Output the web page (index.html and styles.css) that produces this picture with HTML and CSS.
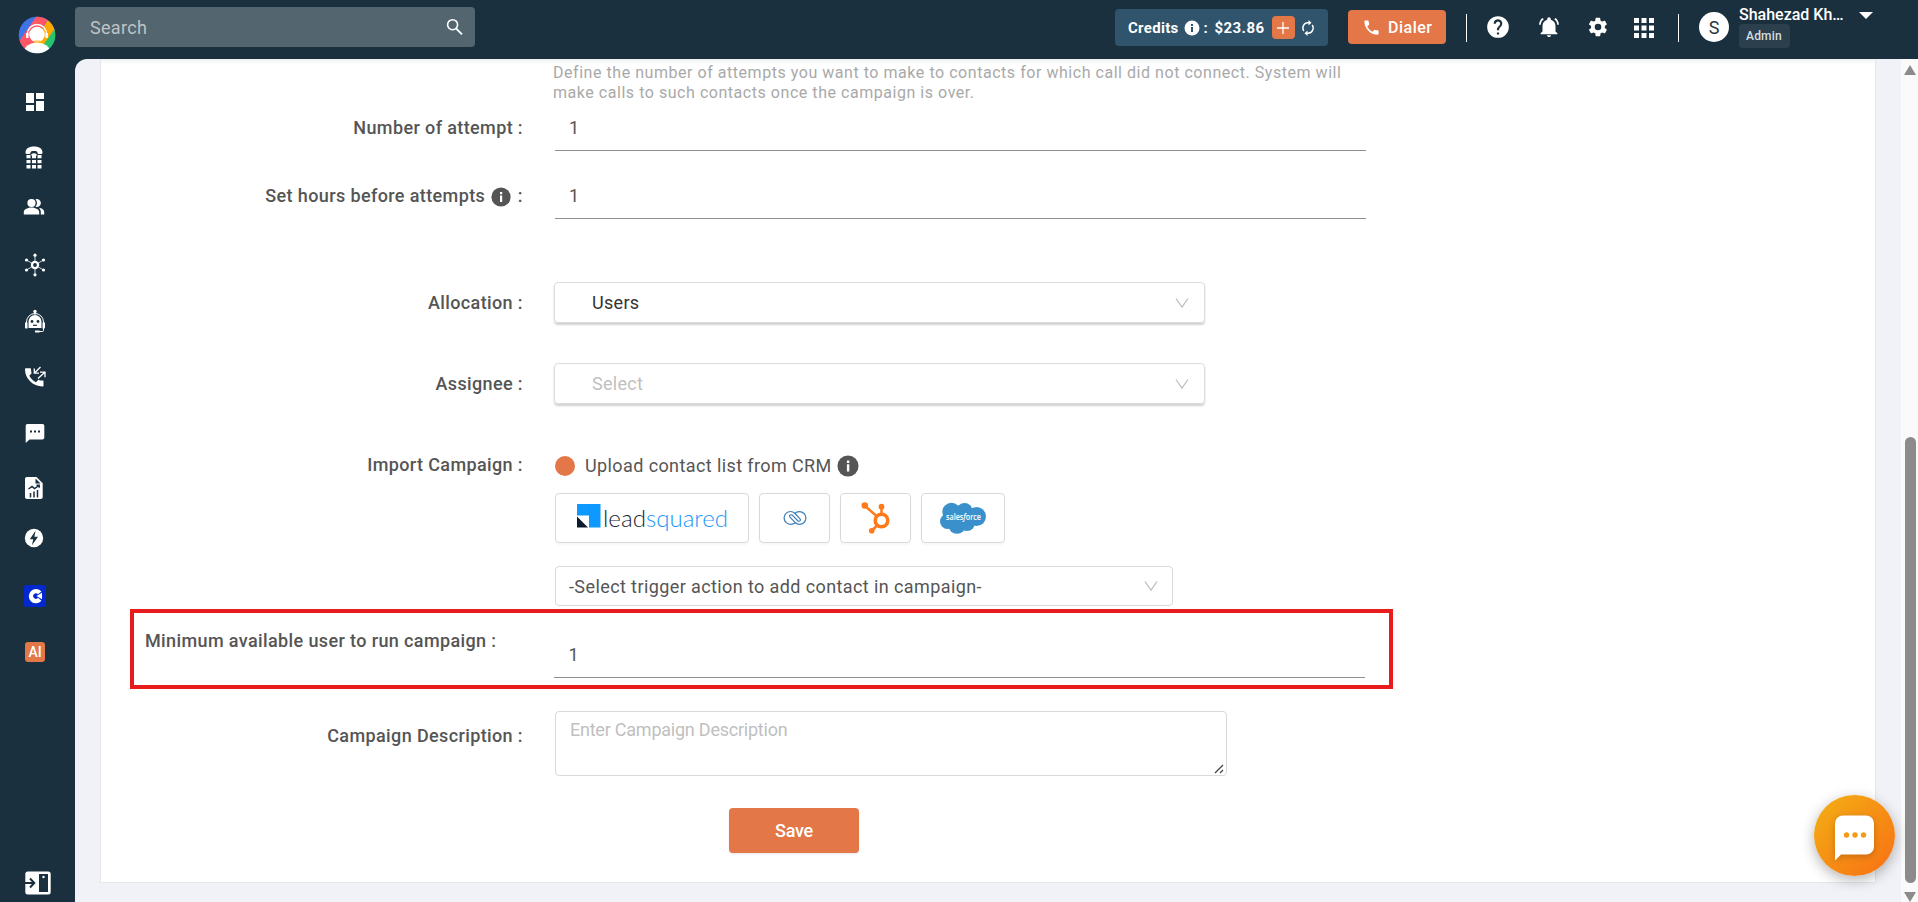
FILE: index.html
```html
<!DOCTYPE html>
<html lang="en">
<head>
    <meta charset="UTF-8">
    <meta name="viewport" content="width=device-width, initial-scale=1.0">
    <title>Campaign</title>
    <link rel="stylesheet" href="styles.css">
</head>
<body>

<!-- Left navigation -->
<aside class="sidebar">
    <a class="logo">
        <svg width="38" height="38" viewBox="0 0 38 38">
            <defs><clipPath id="logoClip"><circle cx="19" cy="19" r="18.3"/></clipPath></defs>
            <g clip-path="url(#logoClip)">
                <rect width="38" height="38" fill="#3f74e8"/>
                <path d="M20 -2L30 3L10 38H-2V30Z" fill="#ff5565"/>
                <path d="M31 2L40 12L24 34L14 30Z" fill="#ffa800"/>
                <path d="M38 11V38H20L26 28Z" fill="#26c46c"/>
                <ellipse cx="19" cy="36" rx="13" ry="9.5" fill="#fff"/>
            </g>
            <circle cx="19" cy="18.5" r="7.8" fill="#fff"/>
            <path d="M9.5 20v-2a9.5 9.5 0 0 1 19 0v2" fill="none" stroke="#fff" stroke-width="1.4"/>
            <path d="M9.3 17v5M28.700 17v5" stroke="#fff" stroke-width="2.400"/>
            <path d="M16 25.200h6.500" stroke="#ffb52e" stroke-width="1.200"/>
        </svg>
    </a>
    <nav>
        <a><svg width="24" height="24" viewBox="0 0 24 24"><path d="M3 13h8V3H3v10zm0 8h8v-6H3v6zm10 0h8V11h-8v10zm0-18v6h8V3h-8z"/></svg></a>
        <a class="shift"><svg width="18" height="24" viewBox="0 0 18 24"><path d="M.5 6.500C.5 2 5 .5 9 .5s8.500 1.500 8.500 6c0 1.100-.7 1.500-1.500 1.500h-2.500c-.7 0-1-.5-1-1.200 0-1.400-1.500-1.800-3.500-1.800s-3.500.4-3.500 1.800c0 .7-.3 1.200-1 1.200H2C1.200 8 .5 7.600.5 6.500z"/><path d="M1.500 9h4v3.300h-4zM7 9h4v3.300H7zM12.500 9h4v3.300h-4zM1.500 14h4v3.300h-4zM7 14h4v3.300H7zM12.500 14h4v3.300h-4zM1.500 19h4v3.500h-4zM7 19h4v3.500H7zM12.500 19h4v3.500h-4z"/><path d="M6 9.500c0-3 6-3 6 0z"/></svg></a>
        <a class="short shift"><svg width="22" height="18" viewBox="0 0 22 18"><circle cx="8.500" cy="5" r="4.100"/><path d="M.8 16.500V14c0-3 4.500-4.500 7.700-4.500s7.700 1.500 7.700 4.500v2.500zM12.500 1.300a4 4 0 1 1 0 7.500 5.500 5.500 0 0 0 0-7.500zM15.700 9.700c2.800.4 5.500 1.700 5.500 4.300v2.500h-3.400V14c0-1.900-.8-3.200-2.100-4.300z"/></svg></a>
        <a><svg width="22" height="24" viewBox="0 0 22 24"><path d="M11 2v20M2.500 7l17 10M19.500 7l-17 10" stroke="#fff" stroke-width=".8"/><circle cx="11" cy="12" r="4.200"/><circle cx="11" cy="12" r="1.900" fill="#1a303e"/><circle cx="11" cy="2.200" r="1.600"/><circle cx="11" cy="21.800" r="1.600"/><circle cx="2.500" cy="7" r="1.600"/><circle cx="19.500" cy="7" r="1.600"/><circle cx="2.500" cy="17" r="1.600"/><circle cx="19.500" cy="17" r="1.600"/></svg></a>
        <a><svg width="22" height="24" viewBox="0 0 22 24"><circle cx="11" cy="2.500" r="1.700"/><path d="M11 3v3M2.500 14v-1a8.500 8.500 0 0 1 17 0v1" fill="none" stroke="#fff" stroke-width="1"/><path d="M4.500 19v-6.500a6.500 6.500 0 0 1 13 0V19zM1 13.500h2.500v6H2.200C1.500 19.500 1 19 1 18.400zM21 13.500h-2.500v6h1.300c.7 0 1.200-.5 1.200-1.100z"/><circle cx="8" cy="12.500" r="1.400" fill="#1a303e"/><circle cx="14" cy="12.500" r="1.400" fill="#1a303e"/><path d="M9 16.300h4" stroke="#1a303e" stroke-width="1.200"/><path d="M19.500 19v2.500q0 1-1 1h-4" fill="none" stroke="#fff"/><path d="M11 21.500h4.500v2H11z"/></svg></a>
        <a><svg width="22" height="22" viewBox="0 0 22 22"><path d="M1 3.200c0-.6.400-1 1-1h4c.6 0 1 .4 1 1 0 1.300.1 2.400.5 3.500.1.400 0 .8-.3 1.100L5.300 9.700c1.500 2.900 3.700 5 6.600 6.500l2-2c.3-.3.700-.4 1.100-.3 1.100.4 2.300.5 3.500.5.600 0 1 .4 1 1v4c0 .6-.4 1-1 1C8.800 20.400 1 12.600 1 3.200z"/><path d="M16.500 1L10.500 7M10.300 2.500v4.700H15M14 12.500l6.500-6M16 6.200h5v5" fill="none" stroke="#fff" stroke-width="1.300"/></svg></a>
        <a><svg width="24" height="24" viewBox="0 0 24 24"><path d="M19.500 3h-15C3.500 3 2.700 3.800 2.700 4.800V22l3.800-3.600h13c1 0 1.800-.8 1.800-1.800V4.800c0-1-.8-1.800-1.800-1.800zM9 11.500H7v-2h2zm4 0h-2v-2h2zm4 0h-2v-2h2z"/></svg></a>
        <a class="shift raised"><svg width="18" height="24" viewBox="0 0 18 24"><path d="M2 1h9.500L17.700 7.200V21c0 1.200-.8 2-2 2H2C.8 23 0 22.200 0 21V3c0-1.200.8-2 2-2z"/><path d="M10.500 2.500v5H15.500z" fill="#1a303e"/><path d="M3.500 13l3.500-2.500 2.500 2L14 9.500M11.500 9.200h2.700v2.500M5.500 21.500v-4.500M9 21.500v-6M12.500 21.500v-7.500" fill="none" stroke="#1a303e" stroke-width="1.500"/></svg></a>
        <a class="short shift"><svg width="20" height="20" viewBox="0 0 20 20"><circle cx="10" cy="10" r="9.200"/><path d="M11.500 2.800L5.800 11.200h3.400L8 17.200l6-8.400h-3.600z" fill="#1a303e"/></svg></a>
        <a><svg width="22" height="22" viewBox="0 0 22 22"><rect width="22" height="22" rx="2.500" fill="#0328cf"/><path d="M17.500 6.500A7.200 7.200 0 1 0 17.500 15.800L14 12.800a2.700 2.700 0 1 1 0-3.500z"/><path d="M12.500 11l5.500-3.200v6.500z"/></svg></a>
        <a><span class="ai">AI</span></a>
    </nav>
    <a class="expand">
        <svg width="26" height="24" viewBox="0 0 26 24"><rect x=".3" y=".5" width="25.400" height="23" rx="2.500"/><path d="M0 12h8.500M5 7.500L9.300 12L5 16.500" fill="none" stroke="#1a303e" stroke-width="2"/><rect x="14" y="3" width="9" height="18" fill="#1a303e"/><circle cx="18.500" cy="6" r="1.200"/></svg>
    </a>
</aside>

<div class="page">
    <!-- Top bar -->
    <header class="topbar">
        <div class="search">
            <span>Search</span>
            <svg width="20" height="20" viewBox="0 0 20 20"><circle cx="7.600" cy="7.700" r="5" fill="none" stroke="#fff" stroke-width="1.600"/><path d="M11 11.400l6 6" stroke="#fff" stroke-width="1.900"/></svg>
        </div>
        <div class="credits">
            <span>Credits</span>
            <svg class="credits-info" width="16" height="16" viewBox="0 0 16 16"><circle cx="8" cy="8" r="7.500" fill="#fff"/><path d="M7 7h2v5H7zM7 4h2v2H7z" fill="#2f546b"/></svg>
            <span class="amount">: $23.86</span>
            <span class="plus"><svg width="12" height="12" viewBox="0 0 12 12"><path d="M6 0v12M0 6h12" stroke="#fff" stroke-width="1.300"/></svg></span>
            <svg width="14" height="16" viewBox="0 0 14 16"><path d="M8.200 2.800H7A5.200 5.200 0 0 0 2.800 11M5.800 13.200H7A5.200 5.200 0 0 0 11.200 5" fill="none" stroke="#fff" stroke-width="1.400"/><path d="M7.500 0l3 2.800-3 2.800zM6.500 10.400v5.600l-3-2.800z" fill="#fff"/></svg>
        </div>
        <button class="dialer">
            <svg width="20" height="20" viewBox="0 0 24 24"><path d="M6.600 10.800c1.400 2.800 3.800 5.100 6.600 6.600l2.200-2.200c.3-.3.700-.4 1-.2 1.100.4 2.300.6 3.600.6.600 0 1 .4 1 1V20c0 .6-.4 1-1 1C10.600 21 3 13.400 3 4c0-.6.4-1 1-1h3.500c.6 0 1 .4 1 1 0 1.300.2 2.500.6 3.600.1.300 0 .7-.2 1z" fill="#fff"/></svg>
            Dialer
        </button>
        <i class="divider"></i>
        <div class="tools">
            <svg width="26" height="26" viewBox="0 0 24 24"><path d="M12 2a10 10 0 1 0 0 20 10 10 0 0 0 0-20zm1 17h-2v-2h2zm2.100-7.700l-.9.900C13.400 12.900 13 13.500 13 15h-2v-.5c0-1.100.4-2.100 1.200-2.800l1.200-1.300A2 2 0 1 0 10 9H8a4 4 0 1 1 7.100 2.300z"/></svg>
            <svg width="24" height="24" viewBox="0 0 24 24"><path d="M12 22c1.100 0 2-.8 2-1.800h-4c0 1 .9 1.800 2 1.800zM18.500 16.500V11c0-3-1.800-5.500-4.700-6.300V4a1.800 1.800 0 0 0-3.600 0v.7C7.300 5.500 5.500 8 5.500 11v5.500l-1.900 1.800v1h16.800v-1zM6.800 4.300L5.500 3C3.300 4.600 2.200 7 2.100 9.800h1.700c.1-2.300 1.200-4.300 3-5.500zM20.200 9.800h1.700c-.1-2.800-1.200-5.200-3.400-6.800l-1.300 1.300c1.800 1.200 2.900 3.200 3 5.500z"/></svg>
            <svg width="22" height="22" viewBox="0 0 24 24"><path d="M19.400 13c0-.3.100-.6.100-1s0-.6-.1-1l2.100-1.600c.2-.2.300-.4.100-.7l-2-3.400c-.1-.2-.4-.3-.6-.2l-2.500 1c-.5-.4-1.100-.7-1.700-1l-.4-2.600c0-.3-.2-.5-.5-.5h-4c-.2 0-.4.200-.5.500L9 5.100c-.6.300-1.200.6-1.700 1l-2.500-1c-.2-.1-.5 0-.6.200l-2 3.400c-.1.300-.1.500.1.700L4.500 11c0 .4-.1.700-.1 1s0 .7.100 1l-2.200 1.600c-.2.200-.2.400-.1.700l2 3.400c.1.200.4.300.6.200l2.500-1c.5.400 1.100.7 1.700 1l.4 2.600c.1.300.3.500.5.500h4c.3 0 .5-.2.500-.5l.4-2.600c.6-.3 1.200-.6 1.700-1l2.500 1c.2.100.5 0 .6-.2l2-3.400c.2-.3.100-.5-.1-.7zM12 15.600a3.600 3.600 0 1 1 0-7.200 3.600 3.600 0 0 1 0 7.200z"/></svg>
            <svg class="apps" width="20" height="20" viewBox="0 0 20 20"><path d="M0 0h5v5H0zM7.500 0h5v5h-5zM15 0h5v5h-5zM0 7.500h5v5H0zM7.500 7.500h5v5h-5zM15 7.500h5v5h-5zM0 15h5v5H0zM7.500 15h5v5h-5zM15 15h5v5h-5z"/></svg>
        </div>
        <i class="divider"></i>
        <div class="avatar">S</div>
        <div class="account">
            <span class="name">Shahezad Kh…</span>
            <span class="role">Admin</span>
        </div>
        <i class="caret"></i>
    </header>

    <div class="viewport">
        <main class="content">
            <!-- Campaign form -->
            <form class="card">
                <p class="hint">Define the number of attempts you want to make to contacts for which call did not connect. System will make calls to such contacts once the campaign is over.</p>

                <div class="row row-attempt">
                    <label>Number of attempt :</label>
                    <div class="line-input">1</div>
                </div>
                <div class="row row-hours">
                    <label>Set hours before attempts <svg class="info" width="20" height="20" viewBox="0 0 20 20"><circle cx="10" cy="10" r="9.600" fill="#555"/><path d="M9 8.500h2.200V15H9zM9 5h2.200v2.200H9z" fill="#fff"/></svg> :</label>
                    <div class="line-input">1</div>
                </div>
                <div class="row row-allocation">
                    <label>Allocation :</label>
                    <div class="select">
                        <span>Users</span>
                        <svg width="14" height="12" viewBox="0 0 14 12"><path d="M1 1.500l6 8.500 6-8.500" fill="none" stroke="#bfbfbf" stroke-width="1.300"/></svg>
                    </div>
                </div>
                <div class="row row-assignee">
                    <label>Assignee :</label>
                    <div class="select empty">
                        <span>Select</span>
                        <svg width="14" height="12" viewBox="0 0 14 12"><path d="M1 1.500l6 8.500 6-8.500" fill="none" stroke="#bfbfbf" stroke-width="1.300"/></svg>
                    </div>
                </div>
                <div class="row row-import">
                    <label>Import Campaign :</label>
                    <div class="import">
                        <div class="radio"><i></i><span>Upload contact list from CRM</span><svg width="22" height="22" viewBox="0 0 20 20"><circle cx="10" cy="10" r="9.600" fill="#555"/><path d="M9 8.500h2.200V15H9zM9 5h2.200v2.200H9z" fill="#fff"/></svg></div>
                        <div class="crms">
                            <div class="crm leadsquared">
                                <svg width="154" height="42" viewBox="0 -5 154 42">
                                    <path d="M0 0h23.500v23.500H12V11.500H0z" fill="#0d99ff"/>
                                    <path d="M0 12.500l11 11H0z" fill="#0b1b2e"/>
                                    <text x="26" y="23" textLength="43" lengthAdjust="spacingAndGlyphs" fill="#1b2436">lead</text>
                                    <text x="69" y="23" textLength="82" lengthAdjust="spacingAndGlyphs" fill="#1c96fa">squared</text>
                                </svg>
                            </div>
                            <div class="crm">
                                <svg width="24" height="16" viewBox="0 0 24 16"><path d="M12.800 12.200Q10.500 14.300 7.500 14.300A6.300 6.300 0 0 1 7.500 1.500Q10 1.500 12 3.500L17 8.800Q18 10.200 16.800 11Q15.600 11.700 14.500 10.500L9.300 5.200M11.200 3.800Q13.500 1.600 16.500 1.600A6.300 6.300 0 0 1 16.500 14.400Q14 14.400 12 12.400L7 7.100Q6 5.800 7.200 5Q8.400 4.300 9.500 5.500" fill="none" stroke="#3f80b8" stroke-width="1.200"/></svg>
                            </div>
                            <div class="crm">
                                <svg width="30" height="32" viewBox="0 0 30 32"><g fill="none" stroke="#ff7a1a"><circle cx="20.500" cy="18.500" r="6.300" stroke-width="3.500"/><path d="M20.500 12V5M15.500 14L4 4M16 23.500l-5 5" stroke-width="2.500"/></g><g fill="#ff7a1a"><circle cx="3.800" cy="3.500" r="3.300"/><circle cx="20.500" cy="4.700" r="2.900"/><circle cx="10.700" cy="28.800" r="2.800"/></g></svg>
                            </div>
                            <div class="crm salesforce">
                                <svg width="46" height="32" viewBox="0 0 46 32"><g fill="#3990cb"><circle cx="11.500" cy="10" r="9.200"/><circle cx="24.500" cy="9" r="8"/><circle cx="36.500" cy="14.500" r="9.500"/><circle cx="7.500" cy="19.500" r="7.500"/><circle cx="17" cy="23" r="8.800"/><circle cx="27" cy="21" r="8"/></g><text x="6" y="17.500" textLength="35" lengthAdjust="spacingAndGlyphs" fill="#fff">sales<tspan font-style="italic">f</tspan>orce</text></svg>
                            </div>
                        </div>
                        <div class="trigger">
                            <span>-Select trigger action to add contact in campaign-</span>
                            <svg width="14" height="12" viewBox="0 0 14 12"><path d="M1 1.500l6 8.500 6-8.500" fill="none" stroke="#bfbfbf" stroke-width="1.300"/></svg>
                        </div>
                    </div>
                </div>
                <!-- Highlighted setting -->
                <div class="highlight">
                    <label>Minimum available user to run campaign :</label>
                    <div class="line-input">1</div>
                </div>
                <div class="row row-description">
                    <label>Campaign Description :</label>
                    <div class="textarea">Enter Campaign Description
                        <svg class="grip" width="10" height="10" viewBox="0 0 10 10"><path d="M1 9L9 1M6 9l3-3" stroke="#444" stroke-width="1.300"/></svg>
                    </div>
                </div>
                <button type="button" class="save">Save</button>
            </form>
        </main>
        <!-- Scrollbar -->
        <div class="scrollbar">
            <i class="up"></i>
            <i class="thumb"></i>
            <i class="down"></i>
        </div>
    </div>
</div>

<!-- Chat launcher -->
<div class="chat">
    <svg width="42" height="48" viewBox="0 0 42 48"><path d="M9 1.500h23a8 8 0 0 1 8 8v23a8 8 0 0 1-8 8H7l-6 6v-37a8 8 0 0 1 8-8z" fill="#fff"/><circle cx="12.500" cy="21" r="2.700" fill="#f59a15"/><circle cx="21" cy="21" r="2.700" fill="#f59a15"/><circle cx="29.500" cy="21" r="2.700" fill="#f59a15"/></svg>
</div>

</body>
</html>
```

FILE: styles.css
```css
* {
    box-sizing: border-box;
}

body {
    margin: 0;
    height: 100vh;
    display: flex;
    overflow: hidden;
    font-family: Roboto, sans-serif;
    font-size: 18px;
    color: #555;
    background-color: #1a303e;
}

svg {
    display: block;
    flex: none;
}

/* Sidebar */
.sidebar {
    width: 75px;
    flex: none;
    display: flex;
    flex-direction: column;
}

.logo {
    height: 74px;
    padding: 16px 0 0 18px;
}

.sidebar nav a {
    height: 56px;
    width: 70px;
    display: flex;
    align-items: center;
    justify-content: center;
    fill: #fff;
}

.sidebar nav a.short {
    height: 44px;
    margin-bottom: 7px;
    padding-bottom: 2px;
}

.sidebar nav a.shift {
    width: 68px;
}

.sidebar nav a.raised {
    padding-bottom: 2px;
}

.ai {
    width: 20px;
    height: 20px;
    border-radius: 3px;
    background-color: #e37747;
    color: #fff;
    font-size: 14px;
    font-weight: 500;
    line-height: 20px;
    text-align: center;
}

.expand {
    margin-top: auto;
    padding: 0 0 7px 25px;
    fill: #fff;
}

/* Top bar */
.page {
    flex: 1;
    display: flex;
    flex-direction: column;
    min-width: 0;
}

.topbar {
    height: 59px;
    flex: none;
    display: flex;
    align-items: flex-start;
    color: #fff;
}

.search {
    width: 400px;
    height: 40px;
    margin-top: 7px;
    padding: 0 10px 0 15px;
    border-radius: 4px;
    background-color: #53666f;
    color: #bfc3c5;
    display: flex;
    align-items: center;
    justify-content: space-between;
    letter-spacing: 0.3px;
}

.credits {
    width: 213px;
    height: 37px;
    margin: 9px 0 0 640px;
    padding-left: 13px;
    border-radius: 4px;
    background-color: #2f546b;
    font-size: 15px;
    font-weight: 700;
    letter-spacing: 0.3px;
    display: flex;
    align-items: center;
}

.credits-info {
    margin: 1px 4px 0 5px;
}

.amount {
    width: 68px;
    letter-spacing: 0.45px;
    word-spacing: 2px;
    white-space: nowrap;
}

.plus {
    width: 23px;
    height: 23px;
    margin-right: 6px;
    border-radius: 4px;
    background-color: #e37747;
    display: flex;
    align-items: center;
    justify-content: center;
}

.dialer {
    width: 98px;
    height: 34px;
    margin: 10px 20px 0 20px;
    padding: 0 0 0 14px;
    border: none;
    border-radius: 4px;
    background-color: #e37747;
    color: #fff;
    font-family: inherit;
    font-size: 16px;
    font-weight: 500;
    letter-spacing: 0.5px;
    display: flex;
    align-items: center;
    gap: 7px;
}

.dialer svg {
    width: 19px;
    height: 19px;
}

.divider {
    width: 1px;
    height: 28px;
    margin-top: 14px;
    background-color: #fff;
}

.tools {
    height: 54px;
    margin: 0 24px 0 18px;
    display: flex;
    align-items: center;
    gap: 26px;
    fill: #fff;
}

.apps {
    margin: 2px 0 0 -1px;
}

.avatar {
    width: 30px;
    height: 30px;
    margin: 12px 10px 0 20px;
    border-radius: 50%;
    background-color: #fff;
    color: #2b3440;
    line-height: 31px;
    text-align: center;
}

.account {
    width: 120px;
    padding-top: 5px;
    display: flex;
    flex-direction: column;
    align-items: flex-start;
}

.name {
    font-size: 16px;
    font-weight: 500;
    line-height: 19px;
    white-space: nowrap;
}

.role {
    height: 24px;
    padding: 0 8px 0 7px;
    border-radius: 4px;
    background-color: #2b404c;
    color: #d8dde0;
    font-size: 12px;
    font-weight: 500;
    line-height: 24px;
    letter-spacing: 0.2px;
}

.caret {
    margin-top: 12px;
    border: 7px solid transparent;
    border-top: 7px solid #fff;
    border-bottom: 0;
}

/* Content area */
.viewport {
    flex: 1;
    display: flex;
    min-height: 0;
    border-top-left-radius: 12px;
    overflow: hidden;
    background-color: #f1f2f7;
}

.content {
    flex: 1;
    padding: 0 25px 19px;
}

.card {
    height: 824px;
    border: 1px solid #e6e7e9;
    border-top: none;
    background: #fff linear-gradient(#eee, #fff) no-repeat 0 0 / 100% 5px;
}

.hint {
    margin: 0 0 0 452px;
    padding-top: 4px;
    width: 810px;
    color: #a9a9a9;
    font-size: 16px;
    line-height: 20px;
    letter-spacing: 0.54px;
}

.row {
    display: flex;
    align-items: flex-start;
}

label {
    width: 422px;
    margin-right: 32px;
    flex: none;
    text-align: right;
    font-weight: 500;
    line-height: 22px;
    letter-spacing: 0.38px;
    white-space: nowrap;
}

.info {
    display: inline-block;
    margin: 0 2px 0 1px;
    vertical-align: -5px;
}

.line-input {
    width: 811px;
    height: 34px;
    padding-left: 14px;
    border-bottom: 1px solid #8f8f8f;
    line-height: 22px;
}

.row-attempt {
    margin-top: 13px;
    height: 69px;
    padding-top: 1px;
}

.row-hours {
    height: 97px;
}

.row-allocation {
    height: 81px;
}

.row-assignee {
    height: 86px;
}

.row-allocation label,
.row-assignee label {
    margin-top: 10px;
    margin-right: 31px;
}

.select {
    width: 651px;
    height: 41px;
    padding: 0 15px 0 37px;
    border: 1px solid #dcdcdc;
    border-radius: 4px;
    box-shadow: 0 2px 2px rgba(0, 0, 0, 0.18);
    color: #333;
    letter-spacing: 0.3px;
    display: flex;
    align-items: center;
    justify-content: space-between;
}

.empty {
    color: #bfbfbf;
}

.row-import label {
    padding-top: 5px;
}

.radio {
    height: 33px;
    display: flex;
    align-items: center;
    letter-spacing: 0.4px;
}

.radio i {
    width: 20px;
    height: 20px;
    margin-right: 10px;
    border-radius: 50%;
    background-color: #e37747;
}

.radio svg {
    margin-left: 5px;
}

.crms {
    margin-top: 11px;
    display: flex;
    gap: 10px;
}

.crm {
    width: 71px;
    height: 50px;
    border: 1px solid #d9d9d9;
    border-radius: 4px;
    box-shadow: 0 2px 2px rgba(0, 0, 0, 0.03);
    display: flex;
    align-items: center;
    justify-content: center;
}

.leadsquared {
    width: 194px;
    padding: 3px 0 0 3px;
}

.leadsquared text {
    font-family: Lato, sans-serif;
    font-size: 24px;
    font-weight: 300;
}

.salesforce {
    width: 84px;
}

.salesforce text {
    font-family: "Open Sans", sans-serif;
    font-size: 9px;
    font-weight: 600;
}

.trigger {
    width: 618px;
    height: 40px;
    margin-top: 23px;
    padding: 0 14px 0 13px;
    border: 1px solid #d9d9d9;
    border-radius: 4px;
    display: flex;
    align-items: center;
    justify-content: space-between;
    letter-spacing: 0.4px;
}

.highlight {
    width: 1263px;
    height: 80px;
    margin: 3px 0 22px 29px;
    border: 4px solid #e81c1c;
    display: flex;
}

.highlight label {
    width: auto;
    margin: 17px 58px 0 11px;
}

.highlight .line-input {
    margin-top: 31px;
}

.row-description label {
    margin-top: 14px;
}

.textarea {
    position: relative;
    width: 672px;
    height: 65px;
    padding: 7px 14px;
    border: 1px solid #d9d9d9;
    border-radius: 4px;
    color: #bfbfbf;
    line-height: 21px;
    letter-spacing: -0.23px;
}

.grip {
    position: absolute;
    right: 2px;
    bottom: 1px;
}

.save {
    display: block;
    width: 130px;
    height: 45px;
    margin: 32px 0 0 628px;
    border: none;
    border-radius: 4px;
    background-color: #e37747;
    color: #fff;
    font-family: inherit;
    font-size: 18px;
    font-weight: 500;
    letter-spacing: -0.25px;
    box-shadow: 0 1px 2px rgba(0, 0, 0, 0.1);
}

/* Scrollbar */
.scrollbar {
    width: 17px;
    padding-top: 6px;
    background-color: #fafafa;
    display: flex;
    flex-direction: column;
    align-items: center;
}

.scrollbar .up,
.scrollbar .down {
    border: 6px solid transparent;
}

.scrollbar .up {
    border-top: 0;
    border-bottom: 10px solid #8b8b8b;
}

.scrollbar .thumb {
    width: 11px;
    height: 448px;
    margin: 362px 0 9px 2px;
    border-radius: 6px;
    background-color: #8b8b8b;
}

.scrollbar .down {
    border-bottom: 0;
    border-top: 10px solid #8b8b8b;
}

/* Chat launcher */
.chat {
    position: absolute;
    left: 1814px;
    top: 795px;
    width: 81px;
    height: 81px;
    padding: 19px 0 0 20px;
    border-radius: 50%;
    background: linear-gradient(135deg, #f3b015, #f86f14);
    box-shadow: 0 4px 14px rgba(0, 0, 0, 0.3);
}

.chat svg {
    filter: drop-shadow(0 2px 3px rgba(0, 0, 0, 0.2));
}
```
